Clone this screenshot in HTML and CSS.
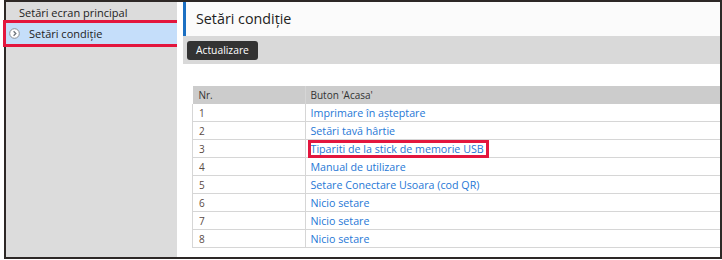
FILE: index.html
```html
<!DOCTYPE html>
<html lang="ro">
<head>
  <meta charset="UTF-8">
  <title>Setări condiţie</title>
  <link rel="stylesheet" href="styles.css">
</head>
<body>
  <div class="frame">
    <div class="sidebar">
      <div class="side-item">Setări ecran principal</div>
      <div class="side-item active">
        <span class="arrow-icon">
          <svg width="11" height="11" viewBox="0 0 11 11">
            <circle cx="5.5" cy="5.5" r="4.8" fill="#fff" stroke="#8a8f96" stroke-width="1"/>
            <path d="M4.6 3.3 L6.8 5.5 L4.6 7.7" fill="none" stroke="#6d737b" stroke-width="1.3"/>
          </svg>
        </span>
        Setări condiţie
      </div>
    </div>

    <div class="main">
      <div class="title-bar">Setări condiţie</div>
      <div class="toolbar">
        <button class="btn">Actualizare</button>
      </div>

      <table class="list">
        <thead>
          <tr><th class="col-nr">Nr.</th><th>Buton 'Acasa'</th></tr>
        </thead>
        <tbody>
          <tr><td>1</td><td><a href="#">Imprimare în aşteptare</a></td></tr>
          <tr><td>2</td><td><a href="#">Setări tavă hârtie</a></td></tr>
          <tr><td>3</td><td><a href="#" class="mark">Tipariti de la stick de memorie USB</a></td></tr>
          <tr><td>4</td><td><a href="#">Manual de utilizare</a></td></tr>
          <tr><td>5</td><td><a href="#">Setare Conectare Usoara (cod QR)</a></td></tr>
          <tr><td>6</td><td><a href="#">Nicio setare</a></td></tr>
          <tr><td>7</td><td><a href="#">Nicio setare</a></td></tr>
          <tr><td>8</td><td><a href="#">Nicio setare</a></td></tr>
        </tbody>
      </table>
    </div>
  </div>
</body>
</html>
```

FILE: styles.css
```css
body {
  margin: 0;
  font-family: "Open Sans", "Noto Sans", sans-serif;
  background: #fff;
}
.frame {
  margin-left: 4px;
  width: 718px;
  height: 259px;
  box-sizing: border-box;
  border: 2px solid #2d2826;
  display: flex;
}
.sidebar {
  width: 171px;
  background: #dcdcdc;
  flex-shrink: 0;
}
.side-item {
  height: 21px;
  line-height: 21px;
  padding-left: 13px;
  font-size: 11px;
  color: #222;
}
.side-item.active {
  display: flex;
  align-items: center;
  gap: 9px;
  padding-left: 3px;
  background: #c5defa;
  outline: 3px solid #e3163e;
}
.arrow-icon {
  display: flex;
}
.main {
  flex: 1;
  padding-left: 6px;
  background: #fff;
}
.title-bar {
  height: 34px;
  line-height: 34px;
  border-left: 3px solid #1b6fc2;
  background: #fbfbfb;
  padding-left: 10px;
  font-size: 14.3px;
  color: #222;
}
.toolbar {
  height: 28px;
  background: #d9d9d9;
  display: flex;
  align-items: center;
  padding-left: 4px;
}
.btn {
  height: 19px;
  padding: 0 9px;
  background: #333;
  color: #fff;
  border: none;
  border-radius: 3px;
  font-family: inherit;
  font-size: 10.3px;
}
.list {
  margin-top: 22px;
  margin-left: 9px;
  width: 528px;
  border-collapse: collapse;
  font-size: 10px;
}
.list th {
  background: #cccccc;
  height: 18px;
  padding: 0 5px;
  text-align: left;
  font-weight: normal;
  color: #333;
}
.list .col-nr {
  width: 101px;
  padding-left: 6px;
}
.list td {
  height: 17px;
  padding: 0 5px;
  border-bottom: 1px solid #d6d6d6;
  color: #5a4a44;
}
.list td:first-child {
  padding-left: 6px;
  border-left: 1px solid #d6d6d6;
}
.list td + td, .list th + th {
  border-left: 1px solid #d6d6d6;
}
.list a {
  color: #1f78d6;
  text-decoration: none;
  font-size: 10.7px;
}
.mark {
  display: inline-block;
  line-height: 12px;
  padding-right: 2px;
  outline: 3px solid #e3163e;
}
```
